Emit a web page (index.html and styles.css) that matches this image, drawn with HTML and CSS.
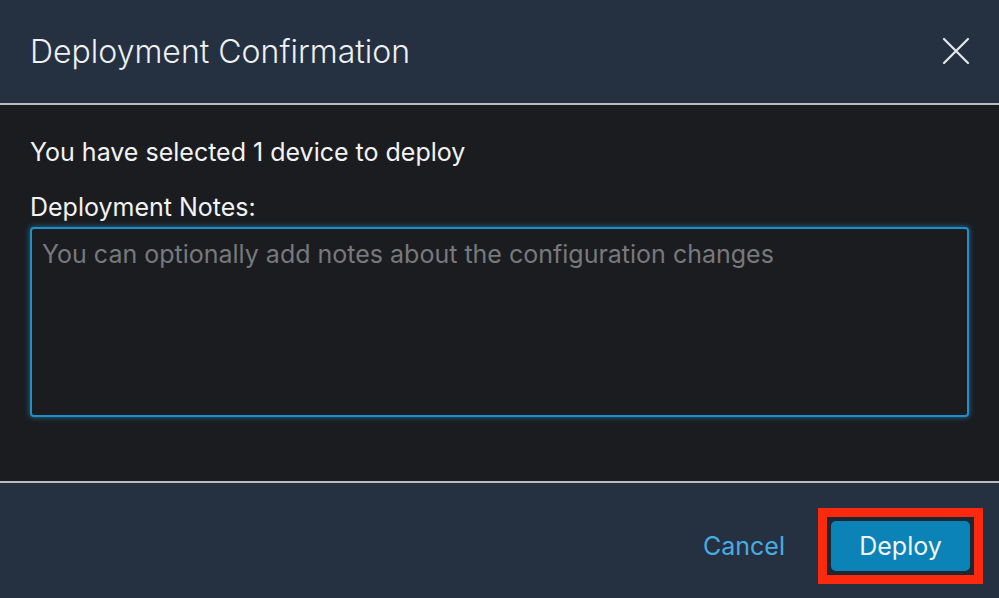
FILE: index.html
```html
<!DOCTYPE html>
<html>
<head>
<meta charset="utf-8">
<link rel="stylesheet" href="styles.css">
</head>
<body>
<div class="dialog">
  <header class="head">
    <h1 class="title">Deployment Confirmation</h1>
    <button class="close" aria-label="Close">
      <svg width="28" height="28" viewBox="0 0 28 28"><path d="M2 2 L26 26 M26 2 L2 26" stroke="#e6e8ea" stroke-width="2.2" fill="none" stroke-linecap="round"/></svg>
    </button>
  </header>
  <main class="body">
    <p class="msg">You have selected 1 device to deploy</p>
    <label class="label" for="notes">Deployment Notes:</label>
    <textarea id="notes" class="notes" placeholder="You can optionally add notes about the configuration changes"></textarea>
  </main>
  <footer class="foot">
    <button class="cancel">Cancel</button>
    <span class="highlight"><button class="deploy">Deploy</button></span>
  </footer>
</div>
</body>
</html>
```
FILE: styles.css
```css
* { box-sizing: border-box; }
html, body { margin: 0; padding: 0; }
body {
  width: 999px;
  height: 598px;
  overflow: hidden;
  background: #1b1c20;
  font-family: "Inter", "Liberation Sans", sans-serif;
}
.dialog {
  display: flex;
  flex-direction: column;
  height: 598px;
}
.head {
  height: 105px;
  background: #253041;
  border-bottom: 2px solid #b9bcc0;
  display: flex;
  align-items: center;
  justify-content: space-between;
  padding: 0 29px 0 30px;
}
.title {
  margin: 0;
  font-weight: 300;
  font-size: 32px;
  line-height: 38px;
  color: #eef0f2;
}
.close {
  background: none;
  border: 0;
  padding: 0;
  width: 28px;
  height: 28px;
  display: flex;
  margin-bottom: 2px;
}
.body {
  flex: 1;
  background: #1b1c20;
  padding: 33px 30px 0 30px;
  display: flex;
  flex-direction: column;
}
.msg {
  margin: 0;
  font-size: 25px;
  color: #f2f3f4;
  line-height: 28px;
}
.label {
  margin-top: 27px;
  font-size: 25px;
  color: #f2f3f4;
  line-height: 28px;
}
.notes {
  margin-top: 6px;
  width: 939px;
  height: 190px;
  background: #1b1c20;
  border: 2.5px solid #1f8fc6;
  border-radius: 4px;
  box-shadow: 0 0 5px 1px rgba(31,143,198,0.55);
  resize: none;
  padding: 10px 10px;
  font-family: "Inter", "Liberation Sans", sans-serif;
  font-size: 25px;
  line-height: 30px;
  color: #f2f3f4;
  outline: none;
}
.notes::placeholder { color: #77797d; }
.foot {
  height: 117px;
  background: #253041;
  border-top: 2px solid #b9bcc0;
  display: flex;
  align-items: center;
  justify-content: flex-end;
  padding: 10px 16px 0 0;
  gap: 33px;
}
.cancel {
  background: none;
  border: 0;
  padding: 0;
  font-family: "Inter", "Liberation Sans", sans-serif;
  font-size: 25px;
  color: #47ade0;
}
.highlight {
  display: flex;
  border: 9px solid #fb2a0e;
  padding: 4px;
  background: #1f2733;
}
.deploy {
  width: 139px;
  height: 50px;
  background: #0b83b7;
  border: 0;
  border-radius: 5px;
  font-family: "Inter", "Liberation Sans", sans-serif;
  font-size: 25px;
  color: #f2f4f6;
}
```
